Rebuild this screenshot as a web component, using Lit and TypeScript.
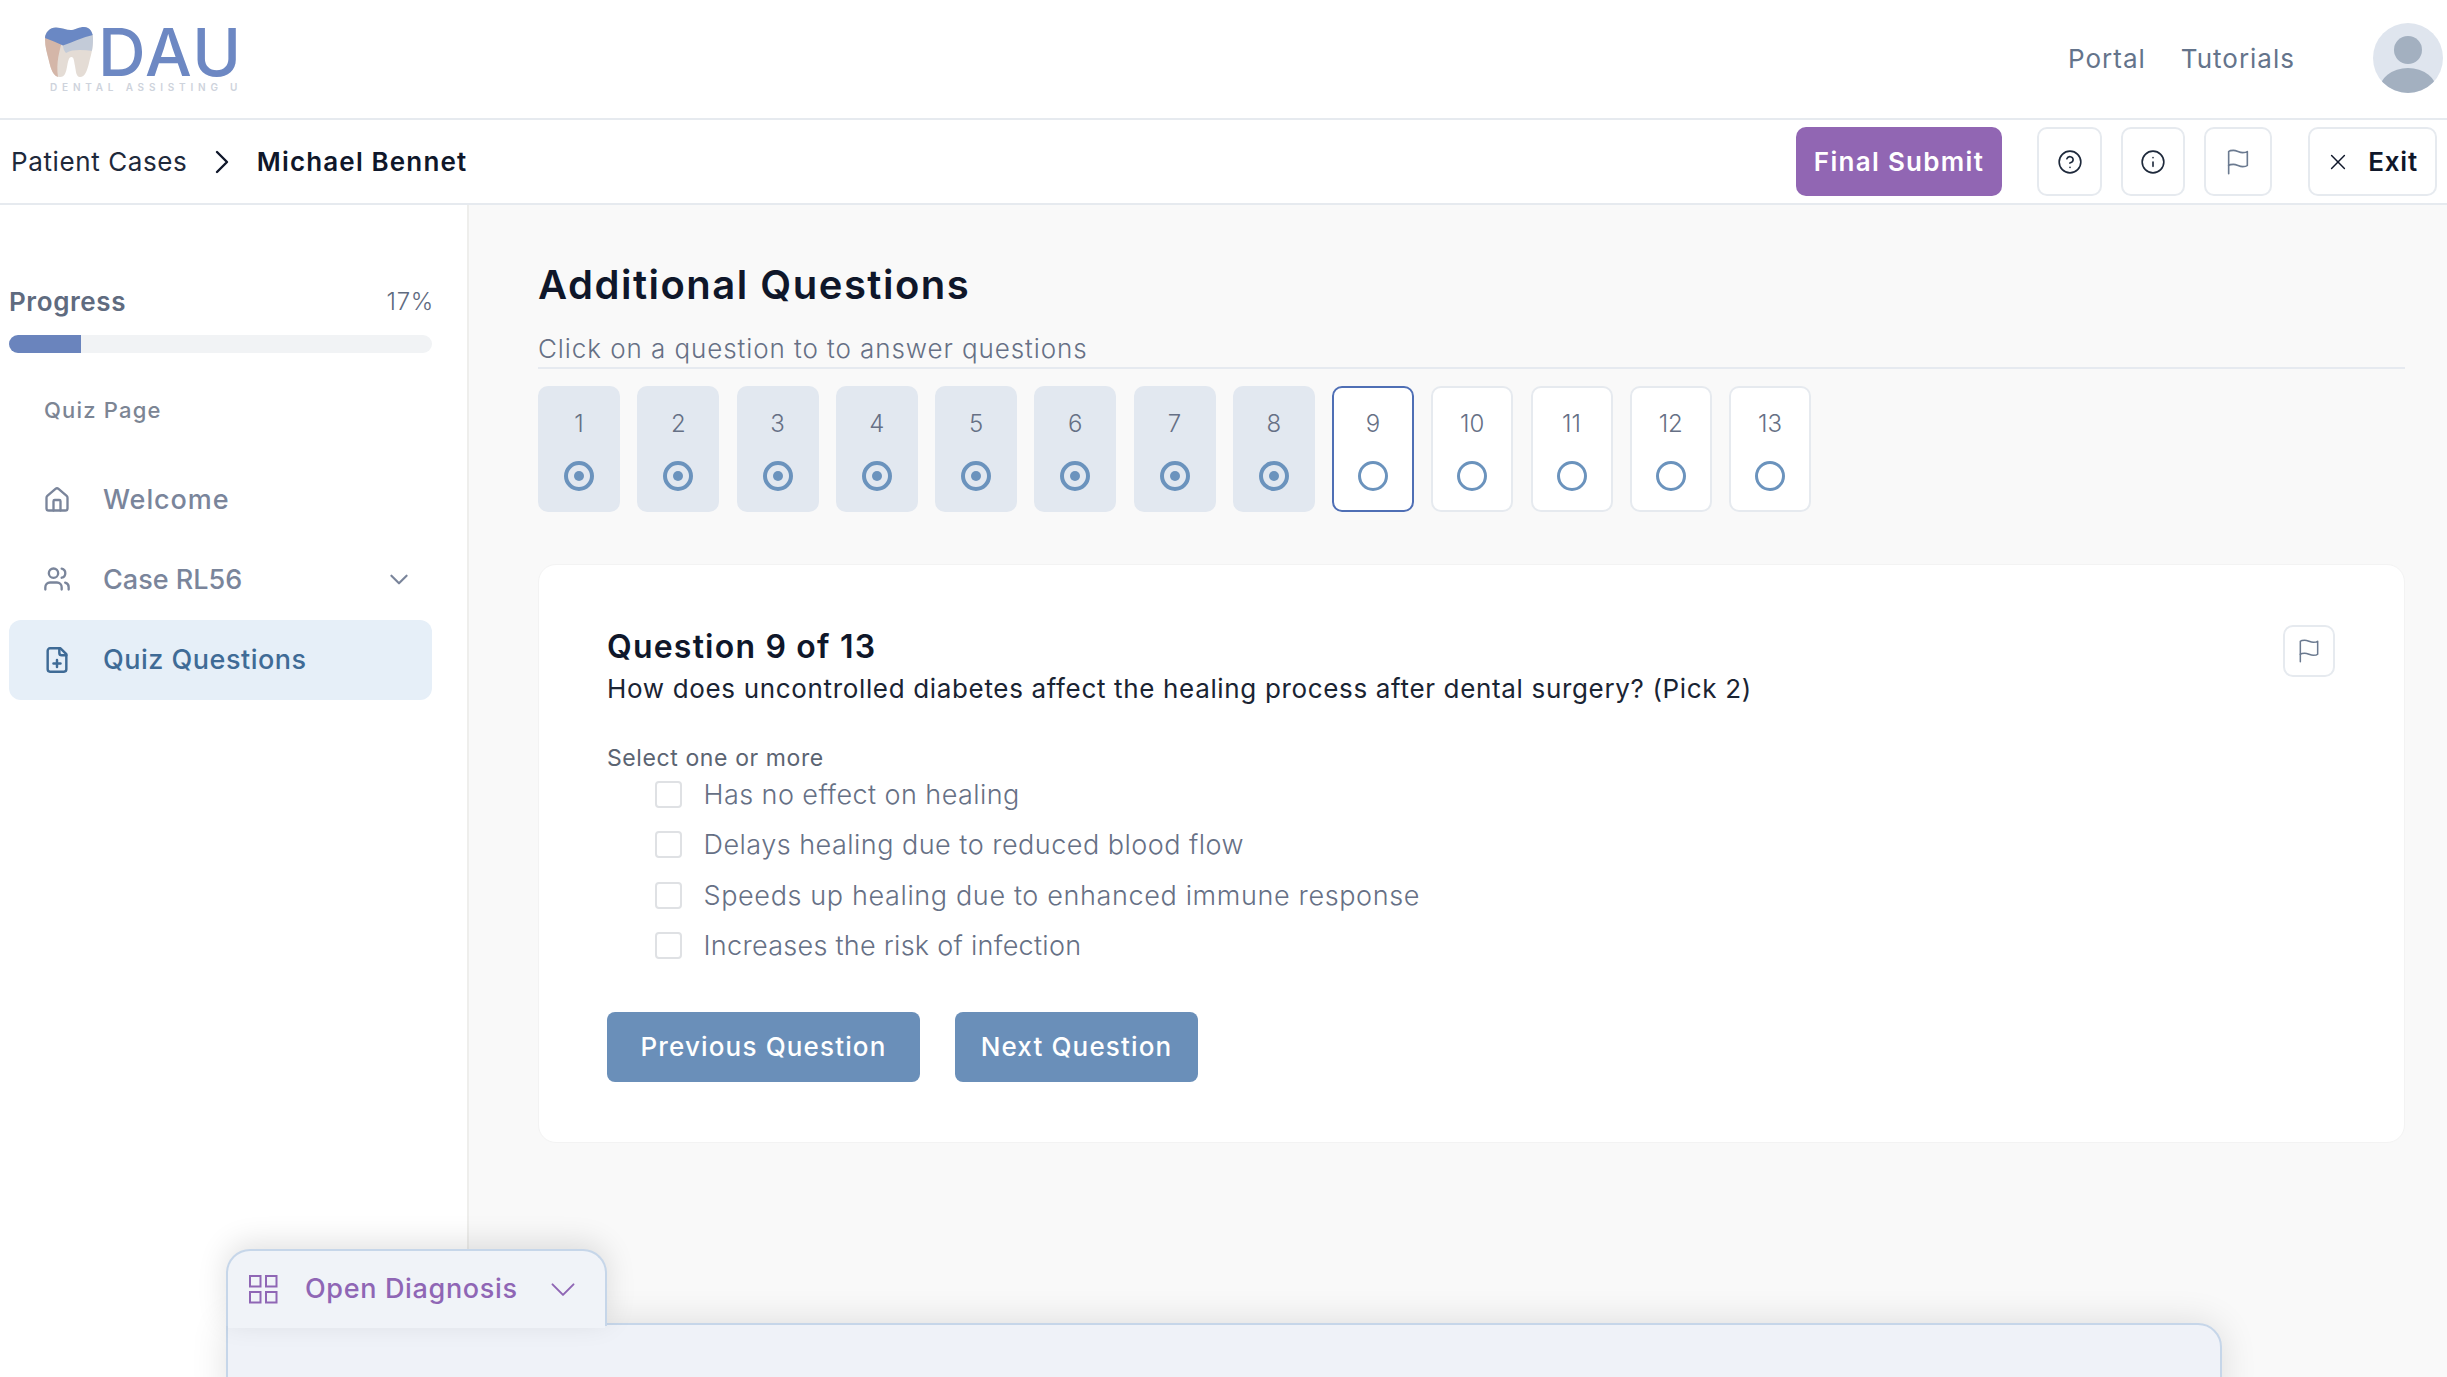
import { LitElement, html, css, svg } from "lit";
import { customElement } from "lit/decorators.js";

const ic = (size: number, body: unknown, sw = 2) => html`<svg width=${size} height=${size} viewBox="0 0 24 24" fill="none" stroke="currentColor" stroke-width=${sw} stroke-linecap="round" stroke-linejoin="round">${body}</svg>`;
const flag = svg`<path d="M4 15s1-1 4-1 5 2 8 2 4-1 4-1V3s-1 1-4 1-5-2-8-2-4 1-4 1z"/><path d="M4 22v-7"/>`;
const chevronDown = svg`<path d="m5 9 7 7 7-7"/>`;

@customElement("app-root")
export class AppRoot extends LitElement {
  static styles = css`
    :host { display: flex; flex-direction: column; height: 100vh; overflow: hidden; position: relative; background: #fff; color: #0f172a; font-family: Inter, "Liberation Sans", sans-serif; }
    * { box-sizing: border-box; }
    .top { height: 120px; flex: none; display: flex; align-items: center; justify-content: space-between; padding: 0 4px 2px 45px; border-bottom: 2px solid #e6eaef; }
    .logo { display: flex; flex-direction: column; margin-top: 3px; }
    .logo-main { display: flex; align-items: center; gap: 5px; height: 52px; }
    .logo-main svg { flex: none; display: block; }
    .dau { font-size: 66px; line-height: 52px; font-weight: 500; color: #6d88c3; letter-spacing: 1.8px; }
    .tag { font-size: 10px; line-height: 12px; color: #ced3dc; letter-spacing: 4.8px; margin: 3px 0 0 5px; white-space: nowrap; font-weight: 600; }
    .top-right { display: flex; align-items: center; }
    .link { font-size: 26px; color: #64748b; letter-spacing: 1px; }
    .link.first { margin-right: 35px; }
    .avatar { margin-left: 78px; display: block; }
    .sub { height: 85px; flex: none; display: flex; align-items: center; padding: 1px 10px 1px 11px; border-bottom: 2px solid #e6eaef; }
    .crumb { font-size: 26px; color: #1e293b; letter-spacing: 0.6px; }
    .chev { margin: 0 26.5px 0 27px; color: #0f172a; display: block; }
    .crumb.cur { font-weight: 600; color: #0f172a; letter-spacing: 1.15px; }
    .spacer { flex: 1; }
    .submit { width: 206px; height: 69px; border-radius: 10px; background: #9166b3; color: #fff; font-size: 26px; font-weight: 600; letter-spacing: 1.3px; display: flex; align-items: center; justify-content: center; }
    .ibtn { height: 69px; border: 2px solid #e6eaef; border-radius: 10px; background: #fff; display: flex; align-items: center; justify-content: center; color: #1e293b; }
    .ibtn.q { width: 65px; margin-left: 35px; }
    .ibtn.i { width: 64px; margin-left: 19px; }
    .ibtn.f { width: 68px; margin-left: 19px; color: #6b7a90; }
    .ibtn.x { width: 129px; margin-left: 36px; gap: 19px; font-size: 26px; font-weight: 600; color: #0f172a; letter-spacing: 0.8px; }
    .body { flex: 1; display: flex; min-height: 0; }
    .side { width: 469px; flex: none; background: #fff; border-right: 2px solid #eeeeec; padding: 79px 35px 0 9px; }
    .prog { display: flex; justify-content: space-between; align-items: center; height: 34px; }
    .prog b { font-size: 26px; font-weight: 600; color: #5f6b7f; letter-spacing: 0.6px; }
    .prog span { font-size: 24px; font-weight: 300; color: #5f6b7f; letter-spacing: 0.7px; margin-right: -2px; }
    .bar { height: 18px; margin-top: 17px; border-radius: 9px; background: #f1f3f5; overflow: hidden; }
    .fill { height: 100%; background: #6a84bd; }
    .group { font-size: 22px; line-height: 30px; font-weight: 500; color: #7c8594; letter-spacing: 1.2px; margin: 42px 0 35px 35px; }
    .nav { height: 79.5px; display: flex; align-items: center; padding: 0 20px 0 34px; color: #7a859b; font-size: 27px; font-weight: 500; border-radius: 12px; letter-spacing: 0.5px; }
    .nav svg:first-child { flex: none; margin-right: 32px; }
    .nav .lab { flex: 1; }
    .nav .lab.wide { letter-spacing: 0.9px; }
    .nav .lab.tight { letter-spacing: 0; }
    .nav.on { background: #e6eff8; color: #3f6b96; margin-top: 1px; }
    .main { flex: 1; background: #f9f9f9; padding: 56px 42px 0 69px; min-width: 0; }
    h1 { margin: 0; font-size: 40px; line-height: 48px; font-weight: 600; color: #0f172a; letter-spacing: 1.5px; }
    .hint { margin-top: 22px; height: 38px; line-height: 36px; font-size: 26px; font-weight: 300; color: #667085; border-bottom: 2px solid #e6eaf0; letter-spacing: 0.92px; }
    .tiles { display: flex; gap: 17.25px; margin-top: 17px; }
    .tile { width: 82px; height: 126px; border-radius: 10px; border: 2px solid #e6eaef; background: #fff; display: flex; flex-direction: column; align-items: center; color: #667085; font-size: 24px; font-weight: 300; padding-top: 20px; }
    .tile.done { background: #e2e8f0; border-color: #e2e8f0; }
    .tile.cur { border-color: #4f6fb5; }
    .tile span { line-height: 32px; height: 32px; }
    .tile svg { margin-top: 21px; display: block; }
    .card { margin-top: 52px; height: 579px; border-radius: 18px; background: #fff; border: 1px solid #f3f3f3; padding: 60px 69px 0 68px; }
    .chead { display: flex; justify-content: space-between; align-items: flex-start; }
    h2 { margin: 2px 0 0; font-size: 32px; line-height: 40px; font-weight: 600; color: #0f172a; letter-spacing: 1.2px; }
    .qtext { margin-top: 5px; font-size: 26px; line-height: 34px; color: #1a2433; letter-spacing: 0.66px; white-space: nowrap; }
    .flagbtn { width: 52px; height: 52px; border: 2px solid #e6eaef; border-radius: 10px; display: flex; align-items: center; justify-content: center; color: #6b7a90; }
    .sel { margin-top: 39px; font-size: 23px; line-height: 26px; color: #5b6472; letter-spacing: 0.6px; }
    .opts { margin-top: -2px; }
    .opt { height: 50.5px; display: flex; align-items: center; gap: 22px; padding-left: 47.5px; font-size: 27px; font-weight: 300; color: #667085; letter-spacing: 0.63px; }
    .opt:nth-child(1) { letter-spacing: 0.43px; }
    .opt:nth-child(2) { letter-spacing: 0.48px; }
    .opt:nth-child(4) { letter-spacing: 0.28px; }
    .box { width: 27px; height: 27px; border: 2px solid #dfe1e4; border-radius: 4px; background: #fff; flex: none; }
    .acts { display: flex; gap: 35px; margin-top: 41px; }
    .btn { height: 70px; padding-bottom: 2px; border-radius: 8px; background: #6a8fb9; color: #fff; font-size: 26px; font-weight: 500; letter-spacing: 1.15px; display: flex; align-items: center; justify-content: center; }
    .btn.p { width: 313px; }
    .btn.n { width: 243px; }
    .dock { position: absolute; left: 226px; top: 1323px; width: 1996px; height: 80px; background: #eff2f8; border: 2px solid #c6d6e9; border-radius: 0 24px 0 0; box-shadow: 0 0 36px rgba(0,0,0,.12); }
    .tab { position: absolute; left: 226px; top: 1249px; width: 381px; height: 77px; background: #f0f3f8; border: 2px solid #c6d6e9; border-bottom: 0; border-radius: 24px 24px 0 0; display: flex; align-items: center; padding: 0 28px 0 20px; color: #8f66b5; font-size: 27px; font-weight: 500; letter-spacing: 0.65px; box-shadow: 0 -6px 30px rgba(0,0,0,.12); }
    .tab span { margin-left: 27px; flex: 1; }
    .dock-cover { position: absolute; left: 228px; top: 1323px; width: 377px; height: 5px; background: #f0f3f8; }
  `;

  tile(n: number) {
    const done = n < 9;
    return html`<div class="tile ${done ? "done" : ""} ${n === 9 ? "cur" : ""}"><span>${n}</span>
      <svg width="30" height="30" viewBox="0 0 30 30" fill="none">
        <circle cx="15" cy="15" r=${done ? 13 : 13.5} stroke="#6b93bd" stroke-width=${done ? 4 : 3}></circle>
        ${done ? svg`<circle cx="15" cy="15" r="5" fill="#6b93bd"></circle>` : ""}
      </svg></div>`;
  }

  render() {
    const opts = ["Has no effect on healing", "Delays healing due to reduced blood flow", "Speeds up healing due to enhanced immune response", "Increases the risk of infection"];
    return html`
      <header class="top">
        <div class="logo">
          <div class="logo-main">
            <svg width="48" height="50" viewBox="0 0 48 50">
              <defs><clipPath id="tooth"><path d="M11 .5C17 .5 22 3.5 27 3C31 2.5 34 0 39 0C45 0 48 5 48 12C48 22 46 28 44 36C42 44 40 50 35 50C31 50 31 44 30 39C29 34 29 30 26.5 30C23.5 30 23 35 22 40C21 45 20 50 15 50C8 50 6 42 4 34C2 26 0 20 0 12C0 5 5 .5 11 .5Z"/></clipPath></defs>
              <g clip-path="url(#tooth)">
                <rect width="48" height="50" fill="#e4dcd5"/>
                <path d="M0 8H19C14 24 11 36 13 50H0Z" fill="#d4b6a8"/>
                <path d="M18 18C26 16 38 10 48 7V24C38 23 28 22 21 26C19 24 18 21 18 18Z" fill="#c3cbd8"/>
                <path d="M0 0H48V8C38 10 28 15 18 18.500C12 16 6 13 0 11Z" fill="#6a88c4"/>
              </g>
            </svg>
            <div class="dau">DAU</div>
          </div>
          <div class="tag">DENTAL ASSISTING U</div>
        </div>
        <div class="top-right">
          <span class="link first">Portal</span><span class="link">Tutorials</span>
          <svg class="avatar" width="70" height="70" viewBox="0 0 70 70">
            <defs><clipPath id="av"><circle cx="35" cy="35" r="35"/></clipPath></defs>
            <g clip-path="url(#av)"><rect width="70" height="70" fill="#dfe5ee"/><ellipse cx="35" cy="27" rx="14" ry="14" fill="#a3b0c0"/><ellipse cx="35" cy="68" rx="29" ry="23" fill="#a3b0c0"/></g>
          </svg>
        </div>
      </header>
      <div class="sub">
        <span class="crumb">Patient Cases</span>
        <svg class="chev" width="16" height="26" viewBox="0 0 16 26" fill="none" stroke="currentColor" stroke-width="2.4" stroke-linecap="round" stroke-linejoin="round"><path d="M3 3l10 10L3 23"/></svg>
        <span class="crumb cur">Michael Bennet</span>
        <div class="spacer"></div>
        <div class="submit">Final Submit</div>
        <div class="ibtn q">${ic(26, svg`<circle cx="12" cy="12" r="10"/><path d="M9.1 9a3 3 0 0 1 5.8 1c0 2-3 3-3 3"/><path d="M12 17h.01"/>`, 1.5)}</div>
        <div class="ibtn i">${ic(26, svg`<circle cx="12" cy="12" r="10"/><path d="M12 16v-4"/><path d="M12 8h.01"/>`, 1.5)}</div>
        <div class="ibtn f">${ic(28, flag, 1.4)}</div>
        <div class="ibtn x">${ic(22, svg`<path d="M19 5 5 19"/><path d="m5 5 14 14"/>`, 1.6)}<span>Exit</span></div>
      </div>
      <div class="body">
        <aside class="side">
          <div class="prog"><b>Progress</b><span>17%</span></div>
          <div class="bar"><div class="fill" style="width:17%"></div></div>
          <div class="group">Quiz Page</div>
          <div class="nav">${ic(28, svg`<path d="M3 10a2 2 0 0 1 .7-1.5l7-6a2 2 0 0 1 2.6 0l7 6a2 2 0 0 1 .7 1.5v9a2 2 0 0 1-2 2H5a2 2 0 0 1-2-2z"/><path d="M15 21v-8a1 1 0 0 0-1-1h-4a1 1 0 0 0-1 1v8"/>`)}<span class="lab wide">Welcome</span></div>
          <div class="nav">${ic(28, svg`<path d="M16 21v-2a4 4 0 0 0-4-4H6a4 4 0 0 0-4 4v2"/><circle cx="9" cy="7" r="4"/><path d="M22 21v-2a4 4 0 0 0-3-3.9"/><path d="M16 3.1a4 4 0 0 1 0 7.8"/>`)}<span class="lab tight">Case RL56</span>${ic(26, chevronDown)}</div>
          <div class="nav on">${ic(28, svg`<path d="M15 2H6a2 2 0 0 0-2 2v16a2 2 0 0 0 2 2h12a2 2 0 0 0 2-2V7z"/><path d="M14 2v4a2 2 0 0 0 2 2h4"/><path d="M9 15h6"/><path d="M12 18v-6"/>`, 2.1)}<span class="lab">Quiz Questions</span></div>
        </aside>
        <main class="main">
          <h1>Additional Questions</h1>
          <div class="hint">Click on a question to to answer questions</div>
          <div class="tiles">${Array.from({ length: 13 }, (_, i) => this.tile(i + 1))}</div>
          <section class="card">
            <div class="chead">
              <div>
                <h2>Question 9 of 13</h2>
                <div class="qtext">How does uncontrolled diabetes affect the healing process after dental surgery? (Pick 2)</div>
              </div>
              <div class="flagbtn">${ic(26, flag, 1.4)}</div>
            </div>
            <div class="sel">Select one or more</div>
            <div class="opts">${opts.map((o) => html`<div class="opt"><div class="box"></div><span>${o}</span></div>`)}</div>
            <div class="acts"><div class="btn p">Previous Question</div><div class="btn n">Next Question</div></div>
          </section>
        </main>
      </div>
      <div class="dock"></div>
      <div class="tab">
        <svg width="30" height="30" viewBox="0 0 30 30" fill="none" stroke="currentColor" stroke-width="2"><rect x="2" y="2" width="10.5" height="10.5"/><rect x="18" y="2" width="10.5" height="10.5"/><rect x="2" y="18" width="10.5" height="10.5"/><rect x="18" y="18" width="10.5" height="10.5"/></svg>
        <span>Open Diagnosis</span>
        ${ic(28, svg`<path d="m3 8 9 9 9-9"/>`, 1.7)}
      </div>
      <div class="dock-cover"></div>
    `;
  }
}
